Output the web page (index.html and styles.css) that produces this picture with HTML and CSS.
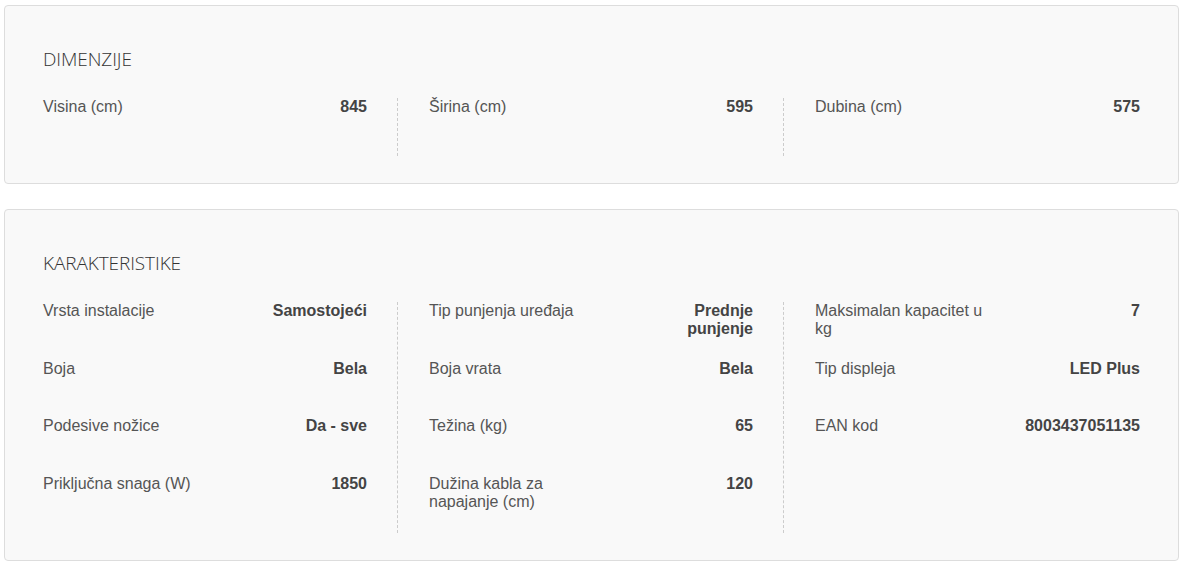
FILE: index.html
```html
<!DOCTYPE html>
<html lang="sr">
<head>
<meta charset="utf-8">
<title>Specifikacije</title>
<link rel="stylesheet" href="styles.css">
</head>
<body>
<div class="page">
  <section class="card">
    <h2 class="card-title">DIMENZIJE</h2>
    <div class="cols">
      <div class="col">
        <div class="row"><span class="label">Visina (cm)</span><span class="value">845</span></div>
      </div>
      <div class="col">
        <div class="row"><span class="label">Širina (cm)</span><span class="value">595</span></div>
      </div>
      <div class="col">
        <div class="row"><span class="label">Dubina (cm)</span><span class="value">575</span></div>
      </div>
    </div>
  </section>
  <section class="card">
    <h2 class="card-title">KARAKTERISTIKE</h2>
    <div class="cols">
      <div class="col">
        <div class="row"><span class="label">Vrsta instalacije</span><span class="value">Samostojeći</span></div>
        <div class="row"><span class="label">Boja</span><span class="value">Bela</span></div>
        <div class="row"><span class="label">Podesive nožice</span><span class="value">Da - sve</span></div>
        <div class="row"><span class="label">Priključna snaga (W)</span><span class="value">1850</span></div>
      </div>
      <div class="col">
        <div class="row"><span class="label">Tip punjenja uređaja</span><span class="value">Prednje punjenje</span></div>
        <div class="row"><span class="label">Boja vrata</span><span class="value">Bela</span></div>
        <div class="row"><span class="label">Težina (kg)</span><span class="value">65</span></div>
        <div class="row"><span class="label">Dužina kabla za napajanje (cm)</span><span class="value">120</span></div>
      </div>
      <div class="col">
        <div class="row"><span class="label">Maksimalan kapacitet u kg</span><span class="value">7</span></div>
        <div class="row"><span class="label">Tip displeja</span><span class="value">LED Plus</span></div>
        <div class="row"><span class="label">EAN kod</span><span class="value">8003437051135</span></div>
      </div>
    </div>
  </section>
</div>
</body>
</html>
```

FILE: styles.css
```css
html, body {
  margin: 0;
  padding: 0;
  background: #ffffff;
}

.page {
  padding: 5px 3px 0 4px;
  display: flex;
  flex-direction: column;
  gap: 25px;
  font-family: "Liberation Sans", Arial, sans-serif;
}

.card {
  background: #f9f9f9;
  border: 1px solid #dddddd;
  border-radius: 4px;
  padding: 41px 9px 27.33px 6px;
}

.card-title {
  margin: 0 0 27px 32px;
  font-family: "Open Sans", Lato, sans-serif;
  font-weight: 300;
  font-size: 19px;
  line-height: 24px;
  color: #333333;
  letter-spacing: -0.1px;
}

.cols {
  display: grid;
  grid-template-columns: repeat(3, 1fr);
}

.col {
  padding: 0 30px 0 32px;
}

.col + .col {
  border-left: 1px dashed #cccccc;
  padding-left: 31px;
}

.col:last-child {
  padding-right: 29px;
}

.row {
  display: flex;
  justify-content: space-between;
  align-items: flex-start;
  min-height: 57.67px;
  font-size: 16px;
  line-height: 18px;
}

.label {
  flex: 0 0 55%;
  color: #555555;
}

.value {
  flex: 1 1 auto;
  padding-left: 20px;
  text-align: right;
  font-weight: bold;
  color: #444444;
}
```
